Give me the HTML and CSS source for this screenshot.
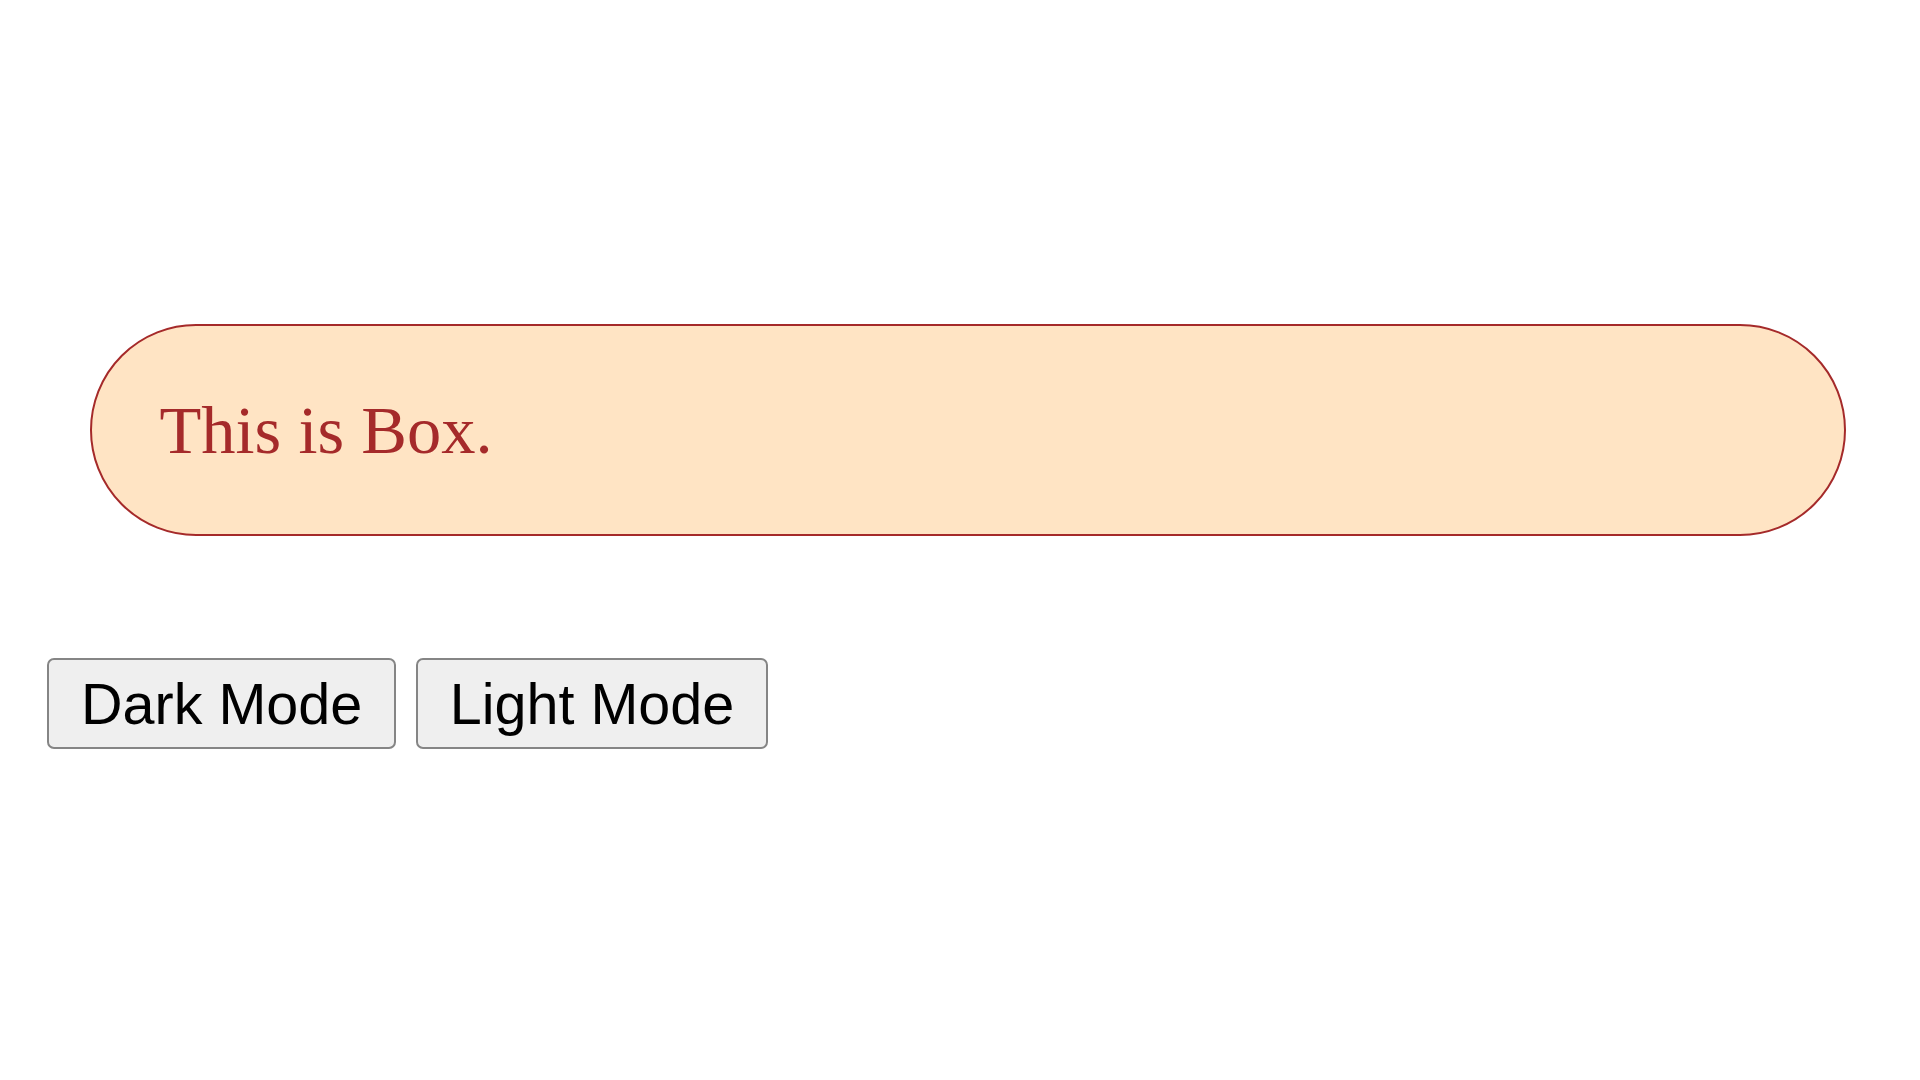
FILE: index.html
```html
<!DOCTYPE html>
<html>
<head>
<meta charset="utf-8">
<title>Box</title>
<link rel="stylesheet" href="styles.css">
</head>
<body>
<div class="box">This is Box.</div>
<div class="controls">
  <button class="mode-btn">Dark Mode</button>
  <button class="mode-btn">Light Mode</button>
</div>
</body>
</html>
```
FILE: styles.css
```css
html, body {
  margin: 0;
  padding: 0;
  background: #ffffff;
}
body {
  padding-top: 324px;
}
.box {
  box-sizing: border-box;
  height: 212px;
  margin: 0 74px 0 90px;
  padding: 0 0 0 67.5px;
  display: flex;
  align-items: center;
  background: #ffe4c4;
  border: 2px solid #a52a2a;
  border-radius: 106px;
  color: #a52a2a;
  font-family: "Liberation Serif", "Times New Roman", serif;
  font-size: 68.5px;
  line-height: 78px;
}
.controls {
  display: flex;
  gap: 19.5px;
  margin: 122px 0 0 47px;
}
.mode-btn {
  box-sizing: border-box;
  height: 91px;
  padding: 0 32px;
  background: #efefef;
  border: 2px solid #858585;
  border-radius: 7px;
  color: #000000;
  font-family: "Liberation Sans", Arial, sans-serif;
  font-size: 57.5px;
  line-height: 66px;
}
```
